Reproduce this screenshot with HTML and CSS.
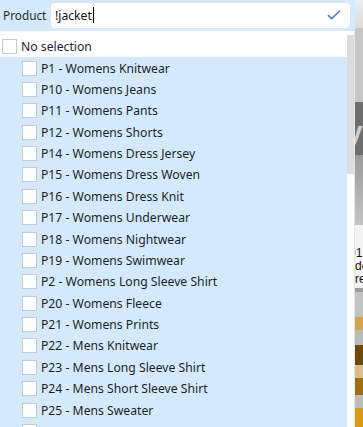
FILE: index.html
```html
<!DOCTYPE html>
<html>
<head>
<meta charset="utf-8">
<link rel="stylesheet" href="styles.css">
</head>
<body>
<div class="app">
  <div class="header">
    <span class="label">Product</span>
    <div class="input">
      <span class="value">!jacket</span><span class="caret"></span>
      <svg class="check" width="14" height="10" viewBox="0 0 14 10"><path d="M1 5.2 L4.6 8.6 L12.8 1" fill="none" stroke="#4d7cb8" stroke-width="1.6"/></svg>
    </div>
  </div>
  <div class="dropdown">
    <div class="list">
      <div class="row none"><span class="box"></span><span>No selection</span></div>
      <div class="row"><span class="box"></span><span>P1 - Womens Knitwear</span></div>
      <div class="row"><span class="box"></span><span>P10 - Womens Jeans</span></div>
      <div class="row"><span class="box"></span><span>P11 - Womens Pants</span></div>
      <div class="row"><span class="box"></span><span>P12 - Womens Shorts</span></div>
      <div class="row"><span class="box"></span><span>P14 - Womens Dress Jersey</span></div>
      <div class="row"><span class="box"></span><span>P15 - Womens Dress Woven</span></div>
      <div class="row"><span class="box"></span><span>P16 - Womens Dress Knit</span></div>
      <div class="row"><span class="box"></span><span>P17 - Womens Underwear</span></div>
      <div class="row"><span class="box"></span><span>P18 - Womens Nightwear</span></div>
      <div class="row"><span class="box"></span><span>P19 - Womens Swimwear</span></div>
      <div class="row"><span class="box"></span><span>P2 - Womens Long Sleeve Shirt</span></div>
      <div class="row"><span class="box"></span><span>P20 - Womens Fleece</span></div>
      <div class="row"><span class="box"></span><span>P21 - Womens Prints</span></div>
      <div class="row"><span class="box"></span><span>P22 - Mens Knitwear</span></div>
      <div class="row"><span class="box"></span><span>P23 - Mens Long Sleeve Shirt</span></div>
      <div class="row"><span class="box"></span><span>P24 - Mens Short Sleeve Shirt</span></div>
      <div class="row"><span class="box"></span><span>P25 - Mens Sweater</span></div>
      <div class="row"><span class="box"></span></div>
    </div>
    <div class="scrollbar"><div class="thumb"></div></div>
  </div>
</div>
<div class="strip">
  <div class="s s-top"></div>
  <div class="s s-light"></div>
  <div class="s s-dark"><span>y</span></div>
  <div class="s s-grad"></div>
  <div class="s s-text">01<br>de<br>re</div>
  <div class="s s-line"></div>
  <div class="s s-gray1"></div>
  <div class="s s-tan"></div>
  <div class="s s-gray2"></div>
  <div class="s s-brown"></div>
  <div class="s s-ltan"></div>
  <div class="s s-mbrown"></div>
  <div class="s s-gray3"></div>
  <div class="s s-orange"></div>
</div>
</body>
</html>
```
FILE: styles.css
```css
html, body {
  margin: 0;
  padding: 0;
}
body {
  width: 363px;
  height: 427px;
  overflow: hidden;
  display: flex;
  font-family: "Noto Sans", "Open Sans", sans-serif;
  font-size: 12.2px;
  color: #1f1f1f;
  background: #bdbdbd;
}
.app {
  width: 355px;
  flex: none;
  display: flex;
  flex-direction: column;
  background: #d4eafc;
}
.header {
  height: 30px;
  flex: none;
  display: flex;
  align-items: center;
  background: #d4eafc;
  padding-right: 5px;
  box-sizing: border-box;
}
.label {
  width: 51px;
  padding-left: 3px;
  box-sizing: border-box;
  font-size: 11.8px;
  color: #2b2b2b;
}
.input {
  flex: 1;
  height: 25px;
  background: #fff;
  border-radius: 4px;
  display: flex;
  align-items: center;
  padding-left: 4px;
  padding-right: 9px;
  box-sizing: border-box;
  font-size: 12.2px;
  color: #111;
}
.caret {
  display: inline-block;
  width: 1px;
  height: 16px;
  background: #000;
  margin-left: 1px;
}
.check {
  margin-left: auto;
}
.dropdown {
  flex: 1;
  display: flex;
  margin-top: 1px;
  padding-top: 4px;
  background: #fff;
  border-right: 1px solid #e6e6e6;
  min-height: 0;
}
.list {
  flex: 1;
  display: flex;
  flex-direction: column;
  background: #d4eafc;
}
.row {
  height: 21.375px;
  flex: none;
  display: flex;
  align-items: center;
  padding-left: 22px;
  white-space: nowrap;
}
.row.none {
  padding-left: 2px;
  background: #fff;
  color: #1d2340;
  padding-top: 1px;
}
.box {
  width: 13px;
  height: 13px;
  border: 1px solid #c9c9c9;
  background: #fff;
  margin-right: 4px;
  flex: none;
}
.scrollbar {
  width: 7px;
  background: #fff;
  flex: none;
}
.thumb {
  height: 139px;
  background: #dcdcdc;
}
.strip {
  width: 8px;
  flex: none;
  display: flex;
  flex-direction: column;
  overflow: hidden;
  font-family: "Liberation Sans", sans-serif;
  font-weight: bold;
}
.s { flex: none; }
.s-top { height: 28px; background: linear-gradient(#e6eef6, #dcdcdc); }
.s-light { height: 74px; background: #c6c6c6; }
.s-dark { height: 53px; background: #6e6e6e; color: #d0d0d0; font-size: 28px; line-height: 60px; overflow: hidden; text-indent: -8px; }
.s-grad { height: 70px; background: linear-gradient(#9a9a9a, #c4c4c4); }
.s-text { height: 63px; background: #f4f4f4; color: #111; font-size: 12px; line-height: 13px; padding-top: 22px; box-sizing: border-box; font-weight: normal; text-indent: -6px; }
.s-line { height: 4px; background: #9c9c9c; }
.s-gray1 { height: 25px; background: #c2c2c2; }
.s-tan { height: 13px; background: #cfa64f; }
.s-gray2 { height: 15px; background: #bababa; }
.s-brown { height: 20px; background: #6b4a0c; }
.s-ltan { height: 13px; background: #d6bf8a; }
.s-mbrown { height: 17px; background: #9b6f12; }
.s-gray3 { height: 13px; background: #bcbcbc; }
.s-orange { height: 20px; background: #d99a14; }
```
